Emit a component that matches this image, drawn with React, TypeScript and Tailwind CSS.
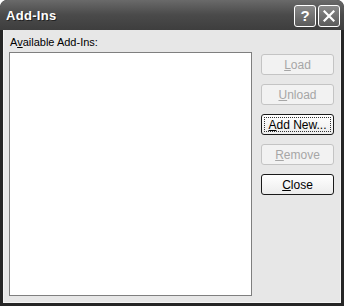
import React from "react";

const font = { fontFamily: '"Liberation Sans", Arial, sans-serif' };

function Btn({ u, rest, enabled, def }: { u: string; rest: string; enabled?: boolean; def?: boolean }) {
  if (!enabled) {
    return (
      <div className="w-[73px] h-[21px] rounded-[3px] border border-[#c4c4c4] bg-[#f2f2f2] flex items-center justify-center text-[12px] text-[#a6a6a6]">
        <span><span className="underline">{u}</span>{rest}</span>
      </div>
    );
  }
  return (
    <div className={`w-[73px] h-[21px] rounded-[3px] border border-[#1a1a1a] bg-gradient-to-b from-[#ffffff] to-[#ececec] flex items-center justify-center text-[12px] text-black ${def ? "p-[2px]" : ""}`}>
      {def ? (
        <div className="w-full h-full border border-dotted border-[#333] flex items-center justify-center">
          <span><span className="underline">{u}</span>{rest}</span>
        </div>
      ) : (
        <span><span className="underline">{u}</span>{rest}</span>
      )}
    </div>
  );
}

export default function App() {
  return (
    <div className="w-[344px] h-[306px] bg-[#262626] rounded-t-[7px] flex flex-col overflow-hidden" style={font}>
      <div className="h-[30px] shrink-0 bg-gradient-to-b from-[#6a6a6a] via-[#4a4a4a] to-[#3e3e3e] flex items-center pl-[6px] pr-[4px] rounded-t-[7px]">
        <span className="text-white font-bold text-[13px] tracking-[0.3px] mt-[1px]" style={{ textShadow: "1px 1px 0 #222" }}>Add-Ins</span>
        <div className="ml-auto flex gap-[2px] mt-[1px]">
          <div className="w-[22px] h-[22px] rounded-[3px] border border-white bg-gradient-to-b from-[#8a8a8a] to-[#5a5a5a] flex items-center justify-center text-white font-bold text-[15px] leading-none">?</div>
          <div className="w-[22px] h-[22px] rounded-[3px] border border-white bg-gradient-to-b from-[#8a8a8a] to-[#5a5a5a] flex items-center justify-center">
            <svg width="12" height="12" viewBox="0 0 12 12">
              <path d="M1.5 1.5 L10.5 10.5 M10.5 1.5 L1.5 10.5" stroke="white" strokeWidth="2.2" strokeLinecap="square" />
            </svg>
          </div>
        </div>
      </div>
      <div className="flex-1 mx-[3px] mb-[3px] bg-[#e7e7e7] border-l border-r border-b border-[#f4f4f4] flex items-start pl-[5px] pt-[5px]">
        <div className="flex flex-col">
          <div className="h-[14px] text-[11px] leading-[14px] text-black pl-[1px]">
            A<span className="underline">v</span>ailable Add-Ins:
          </div>
          <div className="mt-[3px] w-[243px] h-[244px] bg-white border border-[#7f7f7f]" />
        </div>
        <div className="ml-[9px] pt-[19px] flex flex-col gap-[9px]">
          <Btn u="L" rest="oad" />
          <Btn u="U" rest="nload" />
          <Btn u="A" rest="dd New..." enabled def />
          <Btn u="R" rest="emove" />
          <Btn u="C" rest="lose" enabled />
        </div>
      </div>
    </div>
  );
}
